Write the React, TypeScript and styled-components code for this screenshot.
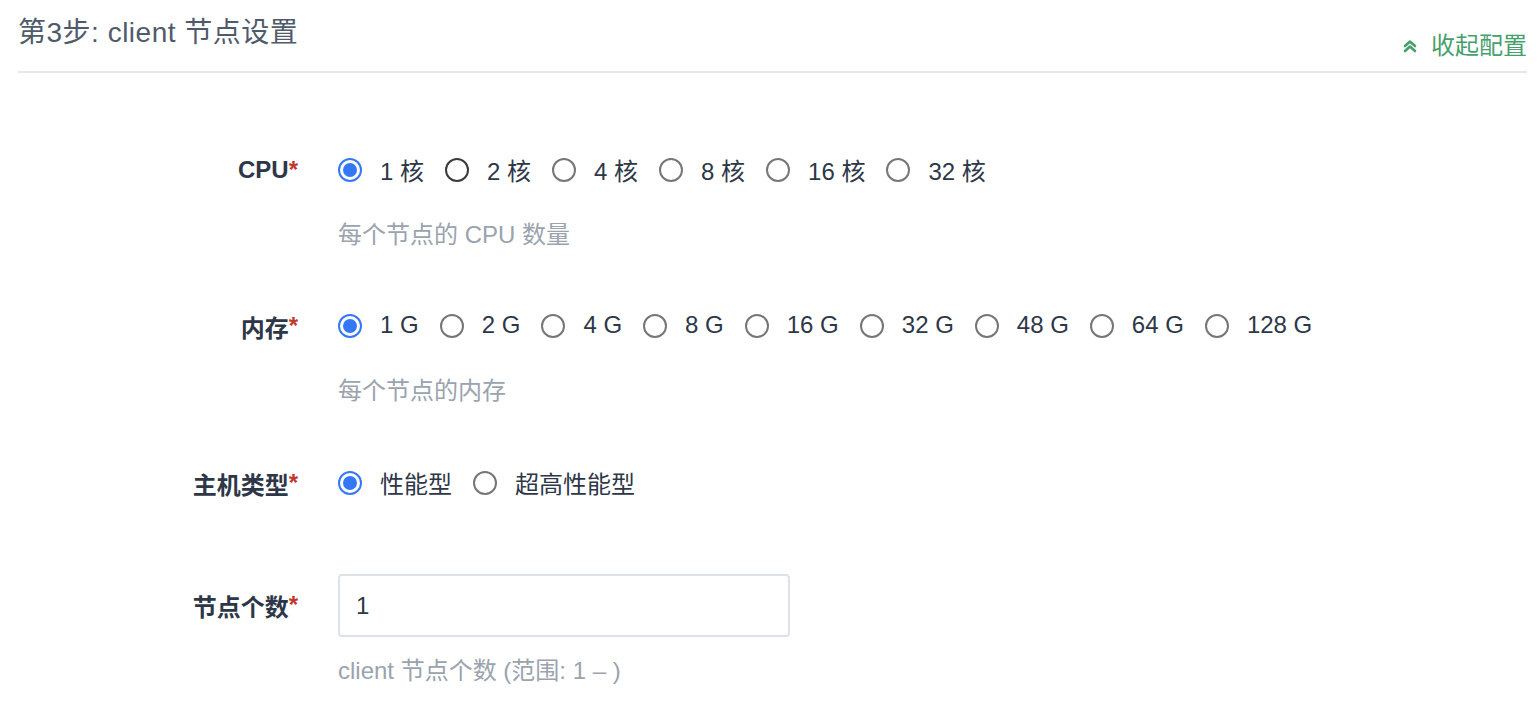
import React from "react";
import styled, { createGlobalStyle } from "styled-components";

const Global = createGlobalStyle`
  html, body { margin: 0; padding: 0; background: #ffffff; }
  body { font-family: "Liberation Sans", "Noto Sans CJK SC", sans-serif; }
`;

const Page = styled.div`
  padding: 0 13px 0 18px;
`;

const Header = styled.div`
  display: flex;
  justify-content: space-between;
  align-items: flex-start;
  padding-top: 12px;
  height: 59px;
  border-bottom: 2px solid #e5e9ef;
`;

const Title = styled.h2`
  margin: 0;
  font-size: 28px;
  line-height: 42px;
  font-weight: 400;
  letter-spacing: 0.5px;
  color: #4f5b6b;
`;

const Collapse = styled.a`
  display: flex;
  align-items: center;
  gap: 14px;
  margin-top: 17px;
  font-size: 24px;
  line-height: 34px;
  color: #45a06c;
  cursor: pointer;
`;

const Form = styled.div`
  padding-top: 66px;
`;

const Field = styled.div<{ $after: number }>`
  display: grid;
  grid-template-columns: 280px 1fr;
  column-gap: 40px;
  margin-bottom: ${(p) => p.$after}px;
`;

const Label = styled.div`
  height: 62px;
  display: flex;
  align-items: center;
  justify-content: flex-end;
  font-size: 24px;
  font-weight: 700;
  color: #2d3748;
`;

const Star = styled.span`
  color: #c0392b;
`;

const Control = styled.div`
  display: flex;
  flex-direction: column;
`;

const RadioGroup = styled.div`
  height: 62px;
  display: flex;
  align-items: center;
`;

const Option = styled.label`
  display: flex;
  align-items: center;
  gap: 18px;
  margin-right: 21px;
  font-size: 24px;
  color: #2d3748;
  cursor: pointer;
  white-space: pre;
`;

const OptionText = styled.span`
  position: relative;
  top: -1px;
`;

const Circle = styled.span<{ $checked?: boolean; $hover?: boolean }>`
  box-sizing: border-box;
  width: 24px;
  height: 24px;
  border-radius: 50%;
  border: 2px solid
    ${(p) => (p.$checked ? "#3478f6" : p.$hover ? "#3a3a3a" : "#767676")};
  display: flex;
  align-items: center;
  justify-content: center;
  flex-shrink: 0;
  &::after {
    content: "";
    width: 14px;
    height: 14px;
    border-radius: 50%;
    background: ${(p) => (p.$checked ? "#3478f6" : "transparent")};
  }
`;

const Help = styled.div`
  margin-top: 17px;
  font-size: 24px;
  line-height: 34px;
  color: #9aa3ae;
`;

const Input = styled.input`
  box-sizing: border-box;
  width: 452px;
  height: 63px;
  border: 2px solid #dde2e9;
  border-radius: 4px;
  padding: 0 16px;
  font-family: inherit;
  font-size: 24px;
  color: #2d3748;
  outline: none;
`;

const ChevronsUp = () => (
  <svg width="14" height="14" viewBox="0 0 14 14" fill="none">
    <path d="M2 7 L7 2.5 L12 7" stroke="#45a06c" strokeWidth="2.6" strokeLinecap="round" strokeLinejoin="round" />
    <path d="M2 12 L7 7.5 L12 12" stroke="#45a06c" strokeWidth="2.6" strokeLinecap="round" strokeLinejoin="round" />
  </svg>
);

const Radios = ({ items, hover }: { items: string[]; hover?: number }) => (
  <RadioGroup>
    {items.map((t, i) => (
      <Option key={t}>
        <Circle $checked={i === 0} $hover={i === hover} />
        <OptionText>{t}</OptionText>
      </Option>
    ))}
  </RadioGroup>
);

export default function App() {
  return (
    <Page>
      <Global />
      <Header>
        <Title>第3步: client 节点设置</Title>
        <Collapse>
          <ChevronsUp />
          收起配置
        </Collapse>
      </Header>
      <Form>
        <Field $after={43}>
          <Label>
            CPU<Star>*</Star>
          </Label>
          <Control>
            <Radios items={["1 核", "2 核", "4 核", "8 核", "16 核", "32 核"]} hover={1} />
            <Help>每个节点的 CPU 数量</Help>
          </Control>
        </Field>
        <Field $after={44}>
          <Label>
            内存<Star>*</Star>
          </Label>
          <Control>
            <Radios items={["1 G", "2 G", "4 G", "8 G", "16 G", "32 G", "48 G", "64 G", "128 G"]} />
            <Help>每个节点的内存</Help>
          </Control>
        </Field>
        <Field $after={60}>
          <Label>
            主机类型<Star>*</Star>
          </Label>
          <Control>
            <Radios items={["性能型", "超高性能型"]} />
          </Control>
        </Field>
        <Field $after={0}>
          <Label>
            节点个数<Star>*</Star>
          </Label>
          <Control>
            <Input defaultValue="1" />
            <Help>client 节点个数 (范围: 1 – )</Help>
          </Control>
        </Field>
      </Form>
    </Page>
  );
}
